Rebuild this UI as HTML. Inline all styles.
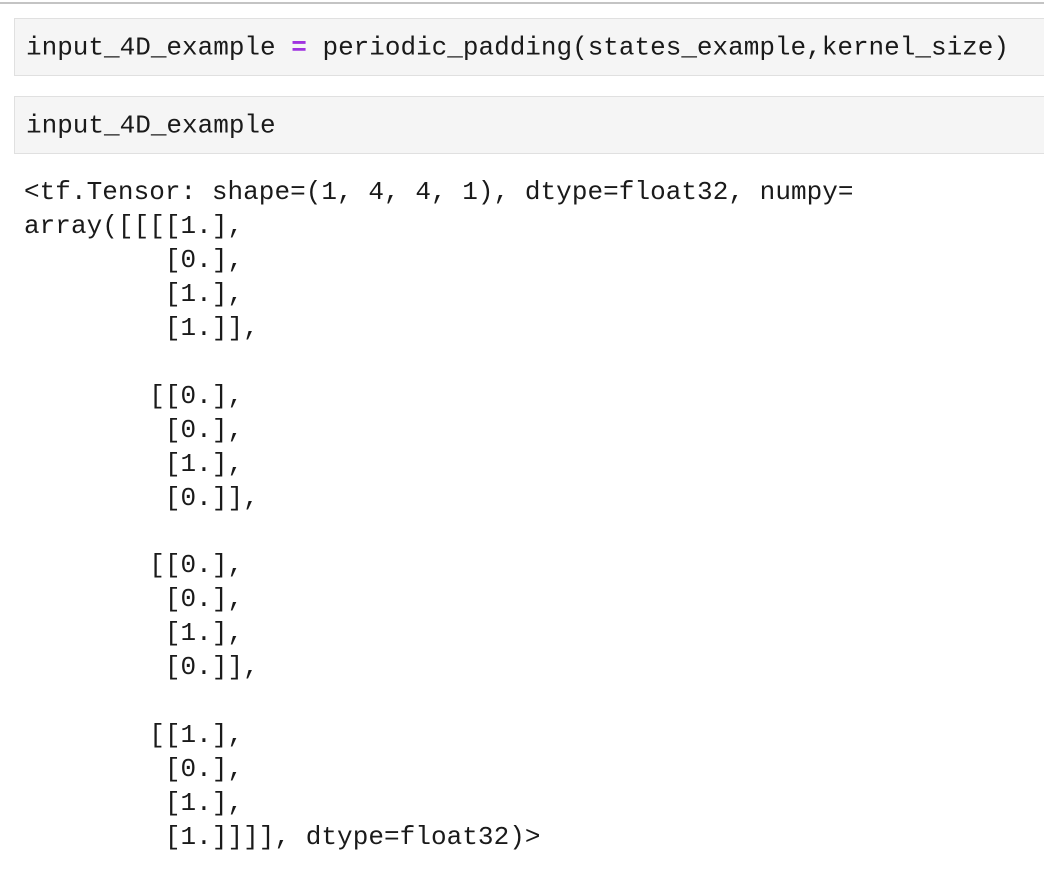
<!DOCTYPE html>
<html><head><style>
html,body{margin:0;padding:0;background:#fff;width:1044px;height:880px;overflow:hidden}
body{font-family:"Liberation Mono","DejaVu Sans Mono",monospace;font-size:26px;color:#1a1a1a}
.top{position:absolute;left:0;top:2px;width:1044px;height:2px;background:#c4c4c4}
.cell{position:absolute;left:14px;width:1040px;background:#f5f5f5;border:1px solid #e0e0e0;box-sizing:border-box}
.cell span.t{position:absolute;left:11px;top:50%;transform:translateY(-48%);white-space:pre}
.eq{color:#a033e0;font-weight:bold}
pre{position:absolute;left:24px;top:176px;margin:0;font:inherit;line-height:33.95px;white-space:pre;letter-spacing:0.05px}
</style></head><body>
<div class="top"></div>
<div class="cell" style="top:18px;height:58px"><span class="t">input_4D_example <span class="eq">=</span> periodic_padding(states_example,kernel_size)</span></div>
<div class="cell" style="top:96px;height:58px"><span class="t">input_4D_example</span></div>
<pre>&lt;tf.Tensor: shape=(1, 4, 4, 1), dtype=float32, numpy=
array([[[[1.],
         [0.],
         [1.],
         [1.]],

        [[0.],
         [0.],
         [1.],
         [0.]],

        [[0.],
         [0.],
         [1.],
         [0.]],

        [[1.],
         [0.],
         [1.],
         [1.]]]], dtype=float32)&gt;</pre>
</body></html>
